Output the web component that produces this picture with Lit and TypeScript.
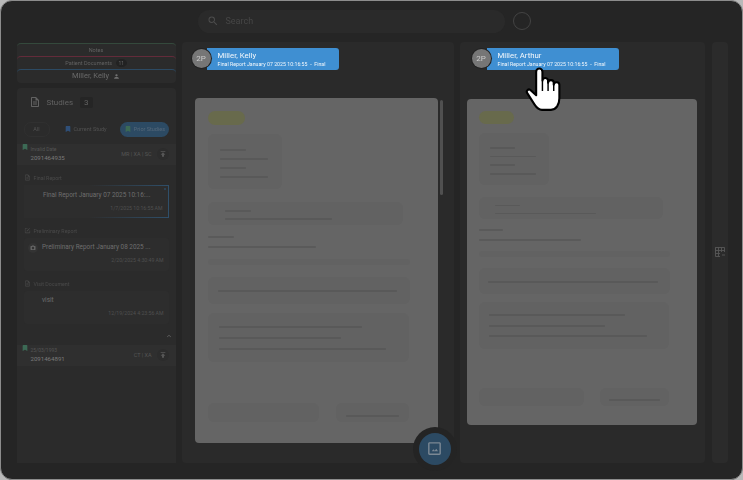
import { LitElement, html, css, svg } from "lit";
import { customElement, property } from "lit/decorators.js";

const icon = (d: string, size: number, color = "#5a5a5a") => html`<svg
  width=${size}
  height=${size}
  viewBox="0 0 24 24"
  fill=${color}
  style="flex:none;display:block"
>
  ${svg`<path d=${d}></path>`}
</svg>`;

const ICONS = {
  search:
    "M15.5 14h-.79l-.28-.27A6.471 6.471 0 0 0 16 9.5 6.5 6.5 0 1 0 9.5 16c1.61 0 3.09-.59 4.23-1.57l.27.28v.79l5 4.99L20.49 19l-4.99-5zm-6 0C7.01 14 5 11.99 5 9.5S7.01 5 9.5 5 14 7.01 14 9.5 11.99 14 9.5 14z",
  doc: "M14 2H6c-1.1 0-2 .9-2 2v16c0 1.1.9 2 2 2h12c1.1 0 2-.9 2-2V8l-6-6zm4 18H6V4h7v5h5v11zM8 15h8v2H8zm0-4h8v2H8z",
  bookmark: "M17 3H7c-1.1 0-2 .9-2 2v16l7-4 7 4V5c0-1.1-.9-2-2-2z",
  person:
    "M12 12c2.21 0 4-1.79 4-4s-1.79-4-4-4-4 1.79-4 4 1.79 4 4 4zm0 2c-2.67 0-8 1.34-8 4v2h16v-2c0-2.66-5.33-4-8-4z",
  edit: "M19 19H5V5h7V3H5c-1.1 0-2 .9-2 2v14c0 1.1.9 2 2 2h14c1.1 0 2-.9 2-2v-7h-2v7zM9 13.2V15h1.8l7.6-7.6-1.8-1.8L9 13.2zM21 5.2 19.8 4c-.4-.4-1-.4-1.4 0l-1 1 1.8 1.8 1-1c.2-.3.2-1.1-.2-1.6z",
  camera:
    "M9 2 7.17 4H4c-1.1 0-2 .9-2 2v12c0 1.1.9 2 2 2h16c1.1 0 2-.9 2-2V6c0-1.1-.9-2-2-2h-3.17L15 2H9zm3 15c-2.76 0-5-2.24-5-5s2.24-5 5-5 5 2.24 5 5-2.24 5-5 5z",
  publish: "M5 4v2h14V4H5zm0 10h4v6h6v-6h4l-7-7-7 7z",
  chevron: "M7.41 15.41 12 10.83l4.59 4.58L18 14l-6-6-6 6z",
  image:
    "M19 5v14H5V5h14m0-2H5c-1.1 0-2 .9-2 2v14c0 1.1.9 2 2 2h14c1.1 0 2-.9 2-2V5c0-1.1-.9-2-2-2zM8 16l2.5-3 1.8 2.2 2.2-3L17 16H8z",
};

@customElement("doc-sheet")
class DocSheet extends LitElement {
  static styles = css`
    :host {
      display: block;
      box-sizing: border-box;
      width: calc(var(--u) * 243);
      height: calc(var(--u) * 345);
      padding: calc(var(--u) * 13);
      background: #656565;
      border-radius: 4px;
    }
    .pill {
      width: calc(var(--u) * 37);
      height: calc(var(--u) * 14);
      background: #686a4c;
      border-radius: 7px;
    }
    .box {
      box-sizing: border-box;
      display: flex;
      flex-direction: column;
      align-items: flex-start;
      background: #626262;
      border-radius: 6px;
    }
    .line {
      height: calc(var(--u) * 2);
      background: #595959;
      border-radius: 1px;
    }
    .b1 {
      width: calc(var(--u) * 74);
      height: calc(var(--u) * 55);
      margin-top: calc(var(--u) * 9);
      padding: calc(var(--u) * 15) 0 0 calc(var(--u) * 12);
      gap: calc(var(--u) * 7.3);
    }
    .b2 {
      width: calc(var(--u) * 195);
      height: calc(var(--u) * 23);
      margin-top: calc(var(--u) * 13);
      padding: calc(var(--u) * 8) 0 0 calc(var(--u) * 17);
      gap: calc(var(--u) * 6.5);
    }
    .plain {
      display: flex;
      flex-direction: column;
      gap: calc(var(--u) * 8.5);
      margin-top: calc(var(--u) * 11);
    }
    .plain .line {
      background: #5a5a5a;
    }
    .thin {
      width: calc(var(--u) * 202);
      height: calc(var(--u) * 6);
      margin-top: calc(var(--u) * 11);
      border-radius: 3px;
    }
    .b3 {
      width: calc(var(--u) * 202);
      height: calc(var(--u) * 27);
      margin-top: calc(var(--u) * 12);
      padding: calc(var(--u) * 13) 0 0 calc(var(--u) * 10);
    }
    .b4 {
      width: calc(var(--u) * 201);
      height: calc(var(--u) * 49);
      margin-top: calc(var(--u) * 9);
      padding: calc(var(--u) * 12.5) 0 0 calc(var(--u) * 11);
      gap: calc(var(--u) * 9);
    }
    .foot {
      display: flex;
      gap: calc(var(--u) * 17);
      margin-top: calc(var(--u) * 41);
    }
    .f1 {
      width: calc(var(--u) * 111);
      height: calc(var(--u) * 19);
    }
    .f2 {
      width: calc(var(--u) * 73);
      height: calc(var(--u) * 19);
      padding: calc(var(--u) * 12) 0 0 calc(var(--u) * 10);
    }
  `;

  line(w: number) {
    return html`<div class="line" style="width:calc(var(--u) * ${w})"></div>`;
  }

  render() {
    return html`
      <div class="pill"></div>
      <div class="box b1">${[26, 48, 26, 48].map((w) => this.line(w))}</div>
      <div class="box b2">${[26, 107].map((w) => this.line(w))}</div>
      <div class="plain">${[26, 108].map((w) => this.line(w))}</div>
      <div class="box thin"></div>
      <div class="box b3">${this.line(179)}</div>
      <div class="box b4">${[143, 122, 167].map((w) => this.line(w))}</div>
      <div class="foot">
        <div class="box f1"></div>
        <div class="box f2">${this.line(53)}</div>
      </div>
    `;
  }
}

@customElement("viewer-panel")
class ViewerPanel extends LitElement {
  @property() name = "";
  @property({ type: Boolean }) scroll = false;

  static styles = css`
    :host {
      display: block;
      box-sizing: border-box;
      background: #2a2a2a;
      border-radius: 4px;
      padding-top: 6px;
      font-family: Roboto, "Liberation Sans", sans-serif;
    }
    .head {
      display: flex;
      align-items: center;
      margin-left: var(--head-left);
    }
    .avatar {
      position: relative;
      z-index: 1;
      width: 19px;
      height: 19px;
      margin: 0 -4px 0 0;
      border-radius: 50%;
      background: #767676;
      box-shadow: 0 0 0 1px #222;
      color: #ccc;
      font-size: 8px;
      line-height: 19px;
      text-align: center;
    }
    .banner {
      box-sizing: border-box;
      width: 132px;
      height: 22px;
      padding: 2px 0 0 11px;
      background: #3f8fd2;
      border-radius: 0 3px 3px 0;
      color: #f4f8fc;
    }
    .name {
      font-size: 7.8px;
      line-height: 11px;
    }
    .sub {
      font-size: 5.2px;
      line-height: 7px;
      letter-spacing: 0.03px;
      white-space: nowrap;
    }
    .row {
      display: flex;
      gap: 2px;
      margin: var(--sheet-top) 0 0 var(--sheet-left);
    }
    .bar {
      width: 3px;
      height: 95px;
      margin-top: 2px;
      border-radius: 2px;
      background: #505050;
    }
  `;

  render() {
    return html`
      <div class="head">
        <div class="avatar">2P</div>
        <div class="banner">
          <div class="name">${this.name}</div>
          <div class="sub">Final Report January 07 2025 10:16:55 &nbsp;-&nbsp; Final</div>
        </div>
      </div>
      <div class="row">
        <doc-sheet></doc-sheet>
        ${this.scroll ? html`<div class="bar"></div>` : ""}
      </div>
    `;
  }
}

@customElement("app-root")
class AppRoot extends LitElement {
  static styles = css`
    :host {
      display: block;
      width: 743px;
      height: 480px;
      background: #b9b9b9;
      font-family: Roboto, "Liberation Sans", sans-serif;
    }
    .frame {
      position: relative;
      box-sizing: border-box;
      width: 743px;
      height: 480px;
      display: flex;
      flex-direction: column;
      background: #252525;
      border: 1.5px solid #8c8c8c;
      border-radius: 12px;
      overflow: hidden;
      filter: blur(0.35px);
    }
    .top {
      flex: none;
      display: flex;
      align-items: center;
      gap: 8px;
      height: 40.5px;
      padding: 0 0 0 196.5px;
      box-sizing: border-box;
    }
    .search {
      box-sizing: border-box;
      width: 307px;
      height: 23px;
      display: flex;
      align-items: center;
      gap: 7px;
      padding-left: 9px;
      background: #2a2a2a;
      border-radius: 12px;
      color: #464646;
      font-size: 9px;
    }
    .ring {
      width: 16px;
      height: 16px;
      border: 1px solid #444;
      border-radius: 50%;
    }
    .body {
      flex: none;
      display: flex;
      height: 421px;
      padding-left: 15.5px;
    }
    .side {
      width: 159px;
      flex: none;
      display: flex;
      flex-direction: column;
      gap: 5px;
      margin-right: 6px;
      padding-top: 1px;
      box-sizing: border-box;
    }
    .tabs {
      background: #2b2b2b;
      border-radius: 4px;
      height: 40px;
      flex: none;
      color: #626262;
      text-align: center;
    }
    .tab {
      box-sizing: border-box;
      height: 13.3px;
      border-top: 1px solid #34493c;
      border-radius: 4px 4px 0 0;
      font-size: 5.5px;
      line-height: 12px;
      display: flex;
      justify-content: center;
      align-items: center;
      gap: 4px;
    }
    .tab.red {
      border-top-color: #632b3a;
    }
    .tab.blue {
      border-top-color: #2c4a63;
      font-size: 7.5px;
      color: #6a6a6a;
    }
    .count {
      padding: 0 2.5px;
      border-radius: 50%;
      background: #222;
      color: #666;
      font-size: 5px;
      line-height: 8px;
    }
    .studies {
      flex: 1;
      background: #2b2b2b;
      border-radius: 4px 4px 0 0;
    }
    .st-head {
      display: flex;
      align-items: center;
      height: 11px;
      margin: 9px 0 0 12px;
      gap: 6px;
      color: #626262;
      font-size: 8px;
    }
    .three {
      padding: 0 4px;
      margin-left: 1px;
      background: #252525;
      border-radius: 2px;
      line-height: 11px;
    }
    .filters {
      display: flex;
      align-items: center;
      margin: 14px 0 0 7px;
      height: 15px;
      color: #525252;
      font-size: 5.5px;
    }
    .f-all {
      width: 26px;
      line-height: 13px;
      text-align: center;
      border: 0.5px solid #303030;
      border-radius: 7px;
      box-sizing: border-box;
    }
    .f-cur {
      display: flex;
      align-items: center;
      gap: 2px;
      margin-left: 14px;
    }
    .f-prior {
      display: flex;
      align-items: center;
      gap: 2px;
      margin-left: 13px;
      width: 49px;
      height: 15px;
      padding-left: 4px;
      box-sizing: border-box;
      background: #2c4a63;
      border-radius: 8px;
      color: #55687a;
      white-space: nowrap;
    }
    .study {
      position: relative;
      display: flex;
      align-items: center;
      height: 21px;
      padding: 0 7px 0 14px;
      background: #2f2f2f;
      color: #555;
    }
    .study .bm {
      position: absolute;
      left: 4px;
      top: -1px;
    }
    .study .info {
      flex: 1;
      font-size: 5px;
      line-height: 7px;
    }
    .study b {
      display: block;
      font-weight: 400;
      font-size: 6.1px;
      line-height: 8px;
      color: #7a7a7a;
      margin-top: 1px;
    }
    .mod {
      font-size: 5.5px;
      margin-right: 5px;
    }
    .mod-btn {
      width: 12px;
      height: 12px;
      display: flex;
      align-items: center;
      justify-content: center;
      border-radius: 50%;
      background: #2c2c2c;
    }
    .first {
      margin-top: 7px;
    }
    .group {
      padding: 9px 7px 0;
    }
    .g-label {
      display: flex;
      align-items: center;
      gap: 3px;
      height: 8px;
      color: #4a4a4a;
      font-size: 5.3px;
    }
    .card {
      box-sizing: border-box;
      position: relative;
      height: 33px;
      margin-top: 3px;
      padding: 4px 5px 0 18.5px;
      background: #2d2d2d;
      color: #6e6e6e;
      font-size: 6.4px;
      line-height: 10px;
      white-space: nowrap;
      border-radius: 3px;
    }
    .card.sel {
      border: 0.5px solid;
      border-image: linear-gradient(90deg, #2d2d2d 45%, #2f4f6a) 1;
    }
    .card .date {
      margin-top: 5.5px;
      text-align: right;
      color: #505050;
      font-size: 5.2px;
      line-height: 7px;
    }
    .thumb {
      position: absolute;
      left: 4px;
      top: 5px;
      width: 10px;
      height: 10px;
      display: flex;
      align-items: center;
      justify-content: center;
      border-radius: 50%;
      background: #333;
    }
    .dot {
      position: absolute;
      right: 2px;
      top: 2px;
      width: 2px;
      height: 2px;
      background: #2c4a63;
      border-radius: 50%;
    }
    .chev {
      display: flex;
      justify-content: flex-end;
      padding: 8px 3px 5px 0;
    }
    .p1 {
      --u: 1px;
      --head-left: 10px;
      --sheet-top: 28px;
      --sheet-left: 13px;
      width: 272px;
      flex: none;
      margin-right: 6px;
    }
    .p2 {
      --u: 0.947px;
      --head-left: 12px;
      --sheet-top: 29px;
      --sheet-left: 7px;
      width: 245px;
      flex: none;
      margin-right: 7px;
    }
    .rail {
      width: 16px;
      flex: none;
      background: #2b2b2b;
      border-radius: 4px;
      display: flex;
      align-items: center;
      justify-content: center;
    }
    .fab {
      position: absolute;
      left: 411.5px;
      top: 425.5px;
      width: 44px;
      height: 44px;
      display: flex;
      align-items: center;
      justify-content: center;
      border-radius: 50%;
      background: #242424;
    }
    .fab span {
      width: 32px;
      height: 32px;
      display: flex;
      align-items: center;
      justify-content: center;
      border-radius: 50%;
      background: #2c4a63;
    }
    .hand {
      position: absolute;
      left: 523.5px;
      top: 65.5px;
    }
  `;

  study(date: string, id: string, mod: string, cls = "") {
    return html`<div class="study ${cls}">
      <span class="bm">${icon(ICONS.bookmark, 8, "#3c6a55")}</span>
      <div class="info">${date}<b>${id}</b></div>
      <span class="mod">${mod}</span>
      <span class="mod-btn">${icon(ICONS.publish, 8, "#565656")}</span>
    </div>`;
  }

  render() {
    const groups = [
      { label: "Final Report", ic: ICONS.doc, title: "Final Report January 07 2025 10:16:...", date: "1/7/2025 10:16:55 AM", sel: true },
      { label: "Preliminary Report", ic: ICONS.edit, title: "Preliminary Report January 08 2025 ...", date: "2/20/2025 4:30:49 AM", thumb: true },
      { label: "Visit Document", ic: ICONS.doc, title: "visit", date: "12/19/2024 4:23:56 AM" },
    ];
    return html`
      <div class="frame">
        <div class="top">
          <div class="search">${icon(ICONS.search, 12, "#4c4c4c")}<span>Search</span></div>
          <div class="ring"></div>
        </div>
        <div class="body">
          <div class="side">
            <div class="tabs">
              <div class="tab">Notes</div>
              <div class="tab red">Patient Documents <span class="count">11</span></div>
              <div class="tab blue">Miller, Kelly ${icon(ICONS.person, 7, "#707070")}</div>
            </div>
            <div class="studies">
              <div class="st-head">
                ${icon(ICONS.doc, 12, "#626262")}<span>Studies</span><span class="three">3</span>
              </div>
              <div class="filters">
                <span class="f-all">All</span>
                <span class="f-cur">${icon(ICONS.bookmark, 8, "#2f4f78")}Current Study</span>
                <span class="f-prior">${icon(ICONS.bookmark, 8, "#3c6a55")}Prior Studies</span>
              </div>
              ${this.study("Invalid Date", "2091464935", "MR | XA | SC", "first")}
              ${groups.map(
                (g) => html`<div class="group">
                  <div class="g-label">${icon(g.ic, 7, "#484848")}${g.label}</div>
                  <div class="card ${g.sel ? "sel" : ""}">
                    ${g.sel ? html`<span class="dot"></span>` : ""}
                    ${g.thumb ? html`<span class="thumb">${icon(ICONS.camera, 6, "#666")}</span>` : ""}
                    <div>${g.title}</div>
                    <div class="date">${g.date}</div>
                  </div>
                </div>`
              )}
              <div class="chev">${icon(ICONS.chevron, 8, "#666")}</div>
              ${this.study("25/03/1993", "2091464891", "CT | XA")}
            </div>
          </div>
          <viewer-panel class="p1" name="Miller, Kelly" scroll></viewer-panel>
          <viewer-panel class="p2" name="Miller, Arthur"></viewer-panel>
          <div class="rail">
            <svg width="12" height="12" viewBox="0 0 24 24" fill="none" stroke="#575757" stroke-width="1.8">
              <path d="M3 12V3h18v9M3 3v18h9M3 9h18M3 15h9M9 3v18M15 3v9M16 18h6"></path>
            </svg>
          </div>
        </div>
        <div class="fab"><span>${icon(ICONS.image, 17, "#7b8894")}</span></div>
        <svg class="hand" width="38" height="46" viewBox="0 0 36 44">
          <path
            d="M10.5 27V4.5a3 3 0 0 1 6 0V13a2.7 2.7 0 0 1 5.4.5V15a2.7 2.7 0 0 1 5.4.5V17a2.7 2.7 0 0 1 5.4.5V30c0 6-3 11-8 11H16c-3 0-5-2-7-5L2 25c-1.5-2 1-4.5 3-3z"
            fill="#fff"
            stroke="#000"
            stroke-width="2"
            stroke-linejoin="round"
          ></path>
          <path d="M16.5 13v10M21.9 14v9M27.3 16v7" fill="none" stroke="#000" stroke-width="1.4"></path>
        </svg>
      </div>
    `;
  }
}

console.log(DocSheet, ViewerPanel, AppRoot);
